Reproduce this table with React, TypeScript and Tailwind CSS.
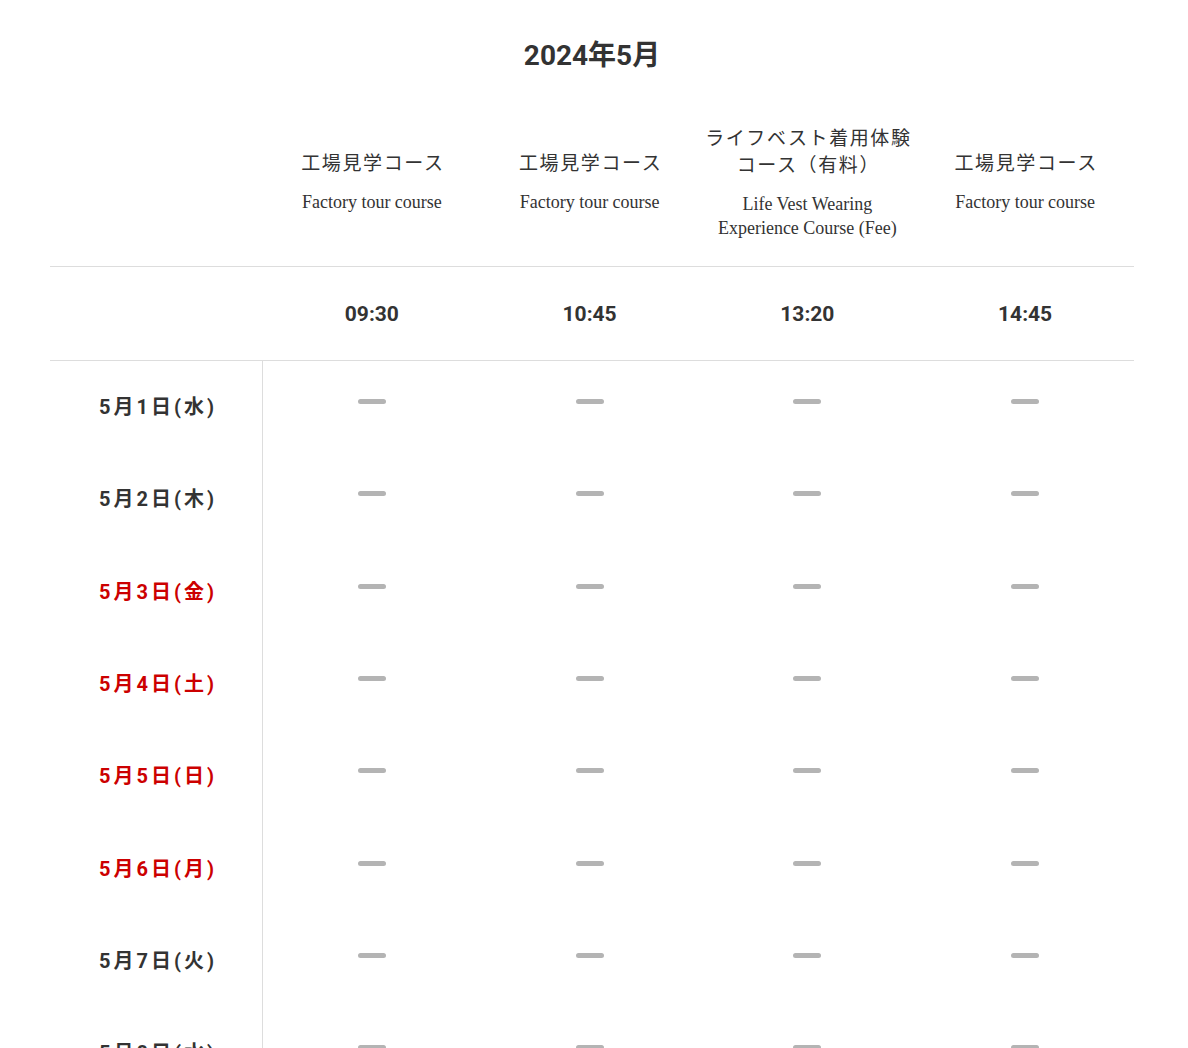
import React from "react";

type Day = { d: number; w: string; red: boolean };

const WEEK = ["日", "月", "火", "水", "木", "金", "土"];
const HOLIDAYS = [3, 4, 5, 6];

const days: Day[] = Array.from({ length: 31 }, (_, i) => {
  const d = i + 1;
  const wi = (d + 2) % 7; // 5/1 は水曜
  return { d, w: WEEK[wi], red: wi === 0 || wi === 6 || HOLIDAYS.includes(d) };
});

const courses = [
  { ja: ["工場見学コース"], en: ["Factory tour course"], time: "09:30" },
  { ja: ["工場見学コース"], en: ["Factory tour course"], time: "10:45" },
  {
    ja: ["ライフベスト着用体験", "コース（有料）"],
    en: ["Life Vest Wearing", "Experience Course (Fee)"],
    time: "13:20",
  },
  { ja: ["工場見学コース"], en: ["Factory tour course"], time: "14:45" },
];

const sans = "font-['Roboto','Noto_Sans_CJK_JP',sans-serif]";

export default function App() {
  return (
    <div className="min-h-screen w-full bg-white text-[#333]">
      <div className="mx-[50px] w-[1084px]">
        {/* Month title */}
        <div className={`flex h-[112px] items-center justify-center text-[28px] font-bold ${sans}`}>
          2024年5月
        </div>

        {/* Course header */}
        <div className="grid grid-cols-[213px_repeat(4,1fr)] pb-[16px]">
          <div />
          {courses.map((c, i) => (
            <div key={i} className="flex h-[138px] flex-col items-center justify-center text-center">
              <div className="pl-[2px] font-['Noto_Sans_CJK_JP',sans-serif] text-[19px] font-normal leading-[27px] tracking-[1.6px]">
                {c.ja.map((l, j) => (
                  <div key={j}>{l}</div>
                ))}
              </div>
              <div className="mt-[15px] font-['Liberation_Serif',serif] text-[18px] leading-[24px]">
                {c.en.map((l, j) => (
                  <div key={j}>{l}</div>
                ))}
              </div>
            </div>
          ))}
        </div>

        {/* Times */}
        <div className="grid h-[95px] grid-cols-[213px_repeat(4,1fr)] border-y border-[#dddddd]">
          <div />
          {courses.map((c) => (
            <div key={c.time} className={`flex items-center justify-center pt-[2px] text-[21px] font-bold ${sans}`}>
              {c.time}
            </div>
          ))}
        </div>

        {/* Days */}
        {days.map((day) => (
          <div key={day.d} className="grid h-[92.3px] grid-cols-[213px_repeat(4,1fr)]">
            <div
              className={`flex items-center justify-center border-r border-[#dddddd] pl-[4px] text-[20px] font-bold tracking-[3px] ${sans} ${
                day.red ? "text-[#cc0000]" : "text-[#333]"
              }`}
            >
              5月{day.d}日({day.w})
            </div>
            {courses.map((c) => (
              <div key={c.time} className="flex items-center justify-center">
                <span className="mb-[11px] h-[5px] w-[28px] rounded-full bg-[#b4b4b4]" />
              </div>
            ))}
          </div>
        ))}
      </div>
    </div>
  );
}
